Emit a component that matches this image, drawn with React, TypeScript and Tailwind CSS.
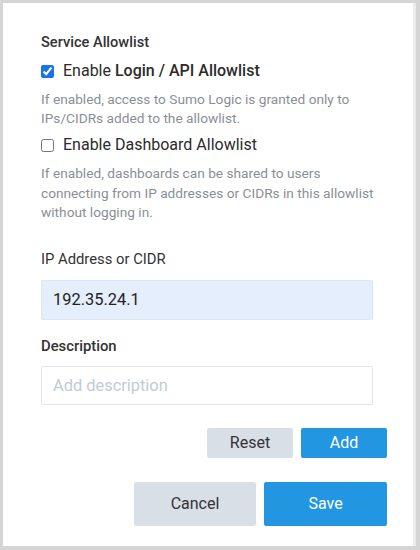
import { useState } from 'react';

export default function App() {
  const [loginAllow, setLoginAllow] = useState(true);
  const [dashAllow, setDashAllow] = useState(false);
  const [ip, setIp] = useState('192.35.24.1');
  const [desc, setDesc] = useState('');

  return (
    <div className="w-[420px] h-[550px] bg-[#d5d5d5] pt-[3px] pl-[3px] pr-[4px] pb-[4px] font-['Roboto',sans-serif]">
      <div className="h-full bg-white border-r-[3px] border-[#ececec] flex flex-col pl-[38px] pr-[26px] pt-[29px]">
        <h2 className="text-[14.6px] font-medium text-[#333] leading-[20px]">Service Allowlist</h2>

        {/* Login / API */}
        <label className="flex items-center mt-[9px] h-[20px] cursor-pointer">
          <input
            type="checkbox"
            checked={loginAllow}
            onChange={e => setLoginAllow(e.target.checked)}
            className="w-[13px] h-[13px] m-0 accent-[#1a73e8]"
          />
          <span className="ml-[9px] text-[16px] text-[#2b2b2b]">
            Enable <span className="font-medium">Login / API Allowlist</span>
          </span>
        </label>
        <p className="mt-[9px] text-[13.7px] leading-[19px] text-[#8a8f96] w-[340px]">
          If enabled, access to Sumo Logic is granted only to IPs/CIDRs added to the allowlist.
        </p>

        {/* Dashboard */}
        <label className="flex items-center mt-[7px] h-[20px] cursor-pointer">
          <input
            type="checkbox"
            checked={dashAllow}
            onChange={e => setDashAllow(e.target.checked)}
            className="w-[13px] h-[13px] m-0 accent-[#1a73e8]"
          />
          <span className="ml-[9px] text-[16px] text-[#2b2b2b]">Enable Dashboard Allowlist</span>
        </label>
        <p className="mt-[9px] text-[13.7px] leading-[19.5px] text-[#8a8f96] w-[340px]">
          If enabled, dashboards can be shared to users connecting from IP addresses or CIDRs in this allowlist without logging in.
        </p>

        <div className="w-[332px]">
          <label className="block mt-[26px] text-[14.8px] leading-[20px] text-[#333]">IP Address or CIDR</label>
          <input
            value={ip}
            onChange={e => setIp(e.target.value)}
            className="mt-[11px] w-full h-[40px] px-[11px] text-[16.4px] text-[#222] bg-[#e5eefc] border border-[#dfe6ee] rounded-[2px] outline-none"
          />
          <label className="block mt-[16px] text-[14.8px] font-medium leading-[20px] text-[#333]">Description</label>
          <input
            value={desc}
            onChange={e => setDesc(e.target.value)}
            placeholder="Add description"
            className="mt-[10px] w-full h-[39px] px-[11px] text-[16.4px] text-[#222] bg-white border border-[#dfe6ee] rounded-[2px] outline-none placeholder:text-[#c3cbd4]"
          />
        </div>

        <div className="flex justify-end gap-[8px] mt-[23px]">
          <button className="w-[86px] h-[30px] rounded-[2px] bg-[#d8dfe6] text-[16px] text-[#333]">Reset</button>
          <button className="w-[86px] h-[30px] rounded-[2px] bg-[#2396e2] text-[16px] text-white">Add</button>
        </div>

        <div className="flex justify-end gap-[8px] mt-[24px]">
          <button className="w-[122px] h-[44px] rounded-[2px] bg-[#d8dfe6] text-[16px] text-[#333]">Cancel</button>
          <button className="w-[123px] h-[44px] rounded-[2px] bg-[#2396e2] text-[16px] text-white">Save</button>
        </div>
      </div>
    </div>
  );
}
